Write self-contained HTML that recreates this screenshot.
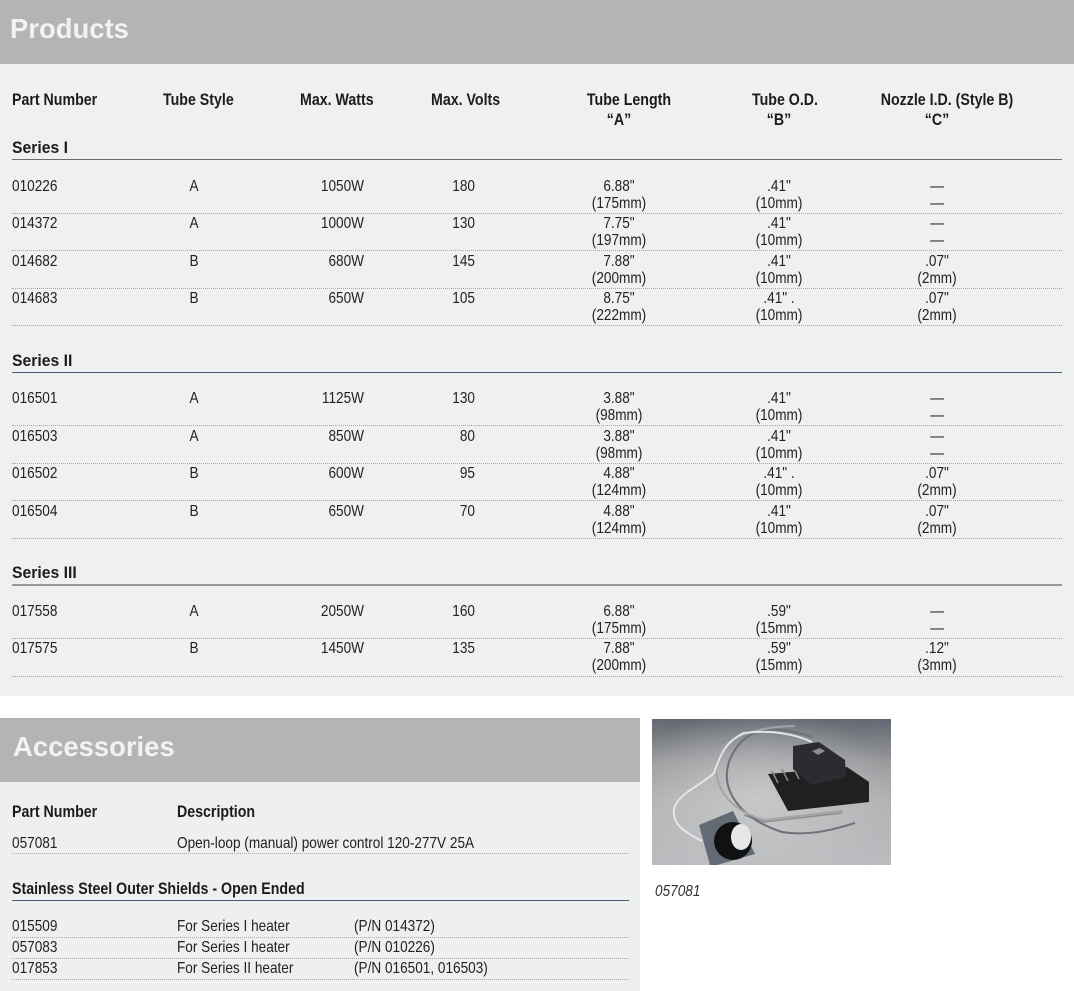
<!DOCTYPE html>
<html><head><meta charset="utf-8"><style>
html,body{margin:0;padding:0;background:#fff}
#p{position:relative;width:1074px;height:991px;overflow:hidden;background:#fff;font-family:"Liberation Sans",sans-serif;color:#222}
#p div{position:absolute}
.t{height:18px;line-height:18px;font-size:16px;margin-top:1px;white-space:pre;transform:scaleX(.85)}
.b{font-weight:bold;font-size:17px;color:#1c1c1c;transform:scaleX(.835)}
.g{transform:scaleX(.925)}
.l{transform-origin:left center}
.c{width:200px;text-align:center;transform-origin:center}
.r{width:200px;text-align:right;transform-origin:right center}
.d{height:0;border-top:1px dotted #a8a8a8;left:12px}
.s{height:1px;left:12px}
.h{font-weight:bold;font-size:28px;line-height:32px;color:#f1f2f1;transform:scaleX(.98);transform-origin:left center;white-space:pre}
</style></head><body><div id="p">
<div style="left:0;top:0;width:1074px;height:64px;background:#b3b5b4"></div>
<div style="left:0;top:64px;width:1074px;height:632px;background:#eff0f0"></div>
<div class="h" style="left:10px;top:13px">Products</div>

<div class="t b l" style="left:12px;top:90px">Part Number</div>
<div class="t b l" style="left:163px;top:90px">Tube Style</div>
<div class="t b l" style="left:300px;top:90px">Max. Watts</div>
<div class="t b l" style="left:431px;top:90px">Max. Volts</div>
<div class="t b c" style="left:529px;top:90px">Tube Length</div>
<div class="t b c" style="left:685px;top:90px">Tube O.D.</div>
<div class="t b c" style="left:847px;top:90px">Nozzle I.D. (Style B)</div>
<div class="t b c" style="left:519px;top:110px">“A”</div>
<div class="t b c" style="left:679px;top:110px">“B”</div>
<div class="t b c" style="left:837px;top:110px">“C”</div>

<div class="t b g l" style="left:12px;top:138px">Series I</div>
<div class="s" style="top:159px;width:1050px;background:#6b6d6f"></div>
<div class="t l" style="left:12px;top:177px">010226</div><div class="t c" style="left:94px;top:177px">A</div><div class="t r" style="left:164px;top:177px">1050W</div><div class="t r" style="left:275px;top:177px">180</div><div class="t c" style="left:519px;top:177px">6.88"</div><div class="t c" style="left:519px;top:194px">(175mm)</div><div class="t c" style="left:679px;top:177px">.41"</div><div class="t c" style="left:679px;top:194px">(10mm)</div><div class="t c" style="left:837px;top:177px">—</div><div class="t c" style="left:837px;top:194px">—</div>
<div class="d" style="top:213px;width:1050px"></div>
<div class="t l" style="left:12px;top:214px">014372</div><div class="t c" style="left:94px;top:214px">A</div><div class="t r" style="left:164px;top:214px">1000W</div><div class="t r" style="left:275px;top:214px">130</div><div class="t c" style="left:519px;top:214px">7.75"</div><div class="t c" style="left:519px;top:231px">(197mm)</div><div class="t c" style="left:679px;top:214px">.41"</div><div class="t c" style="left:679px;top:231px">(10mm)</div><div class="t c" style="left:837px;top:214px">—</div><div class="t c" style="left:837px;top:231px">—</div>
<div class="d" style="top:250px;width:1050px"></div>
<div class="t l" style="left:12px;top:252px">014682</div><div class="t c" style="left:94px;top:252px">B</div><div class="t r" style="left:164px;top:252px">680W</div><div class="t r" style="left:275px;top:252px">145</div><div class="t c" style="left:519px;top:252px">7.88"</div><div class="t c" style="left:519px;top:269px">(200mm)</div><div class="t c" style="left:679px;top:252px">.41"</div><div class="t c" style="left:679px;top:269px">(10mm)</div><div class="t c" style="left:837px;top:252px">.07"</div><div class="t c" style="left:837px;top:269px">(2mm)</div>
<div class="d" style="top:288px;width:1050px"></div>
<div class="t l" style="left:12px;top:289px">014683</div><div class="t c" style="left:94px;top:289px">B</div><div class="t r" style="left:164px;top:289px">650W</div><div class="t r" style="left:275px;top:289px">105</div><div class="t c" style="left:519px;top:289px">8.75"</div><div class="t c" style="left:519px;top:306px">(222mm)</div><div class="t c" style="left:679px;top:289px">.41" .</div><div class="t c" style="left:679px;top:306px">(10mm)</div><div class="t c" style="left:837px;top:289px">.07"</div><div class="t c" style="left:837px;top:306px">(2mm)</div>
<div class="d" style="top:325px;width:1050px"></div>

<div class="t b g l" style="left:12px;top:351px">Series II</div>
<div class="s" style="top:372px;width:1050px;background:#4d5b6e"></div>
<div class="t l" style="left:12px;top:389px">016501</div><div class="t c" style="left:94px;top:389px">A</div><div class="t r" style="left:164px;top:389px">1125W</div><div class="t r" style="left:275px;top:389px">130</div><div class="t c" style="left:519px;top:389px">3.88"</div><div class="t c" style="left:519px;top:406px">(98mm)</div><div class="t c" style="left:679px;top:389px">.41"</div><div class="t c" style="left:679px;top:406px">(10mm)</div><div class="t c" style="left:837px;top:389px">—</div><div class="t c" style="left:837px;top:406px">—</div>
<div class="d" style="top:425px;width:1050px"></div>
<div class="t l" style="left:12px;top:427px">016503</div><div class="t c" style="left:94px;top:427px">A</div><div class="t r" style="left:164px;top:427px">850W</div><div class="t r" style="left:275px;top:427px">80</div><div class="t c" style="left:519px;top:427px">3.88"</div><div class="t c" style="left:519px;top:444px">(98mm)</div><div class="t c" style="left:679px;top:427px">.41"</div><div class="t c" style="left:679px;top:444px">(10mm)</div><div class="t c" style="left:837px;top:427px">—</div><div class="t c" style="left:837px;top:444px">—</div>
<div class="d" style="top:463px;width:1050px"></div>
<div class="t l" style="left:12px;top:464px">016502</div><div class="t c" style="left:94px;top:464px">B</div><div class="t r" style="left:164px;top:464px">600W</div><div class="t r" style="left:275px;top:464px">95</div><div class="t c" style="left:519px;top:464px">4.88"</div><div class="t c" style="left:519px;top:481px">(124mm)</div><div class="t c" style="left:679px;top:464px">.41" .</div><div class="t c" style="left:679px;top:481px">(10mm)</div><div class="t c" style="left:837px;top:464px">.07"</div><div class="t c" style="left:837px;top:481px">(2mm)</div>
<div class="d" style="top:500px;width:1050px"></div>
<div class="t l" style="left:12px;top:502px">016504</div><div class="t c" style="left:94px;top:502px">B</div><div class="t r" style="left:164px;top:502px">650W</div><div class="t r" style="left:275px;top:502px">70</div><div class="t c" style="left:519px;top:502px">4.88"</div><div class="t c" style="left:519px;top:519px">(124mm)</div><div class="t c" style="left:679px;top:502px">.41"</div><div class="t c" style="left:679px;top:519px">(10mm)</div><div class="t c" style="left:837px;top:502px">.07"</div><div class="t c" style="left:837px;top:519px">(2mm)</div>
<div class="d" style="top:538px;width:1050px"></div>

<div class="t b g l" style="left:12px;top:563px">Series III</div>
<div class="s" style="top:584px;width:1050px;height:2px;background:#97999c"></div>
<div class="t l" style="left:12px;top:602px">017558</div><div class="t c" style="left:94px;top:602px">A</div><div class="t r" style="left:164px;top:602px">2050W</div><div class="t r" style="left:275px;top:602px">160</div><div class="t c" style="left:519px;top:602px">6.88"</div><div class="t c" style="left:519px;top:619px">(175mm)</div><div class="t c" style="left:679px;top:602px">.59"</div><div class="t c" style="left:679px;top:619px">(15mm)</div><div class="t c" style="left:837px;top:602px">—</div><div class="t c" style="left:837px;top:619px">—</div>
<div class="d" style="top:638px;width:1050px"></div>
<div class="t l" style="left:12px;top:639px">017575</div><div class="t c" style="left:94px;top:639px">B</div><div class="t r" style="left:164px;top:639px">1450W</div><div class="t r" style="left:275px;top:639px">135</div><div class="t c" style="left:519px;top:639px">7.88"</div><div class="t c" style="left:519px;top:656px">(200mm)</div><div class="t c" style="left:679px;top:639px">.59"</div><div class="t c" style="left:679px;top:656px">(15mm)</div><div class="t c" style="left:837px;top:639px">.12"</div><div class="t c" style="left:837px;top:656px">(3mm)</div>
<div class="d" style="top:676px;width:1050px"></div>

<div style="left:0;top:718px;width:640px;height:64px;background:#b3b5b4"></div>
<div style="left:0;top:782px;width:640px;height:209px;background:#eeefef"></div>
<div class="h" style="left:13px;top:731px">Accessories</div>
<div class="t b l" style="left:12px;top:802px">Part Number</div>
<div class="t b l" style="left:177px;top:802px">Description</div>
<div class="t l" style="left:12px;top:834px">057081</div>
<div class="t l" style="left:177px;top:834px">Open-loop (manual) power control 120-277V 25A</div>
<div class="d" style="top:853px;width:617px"></div>
<div class="t b l" style="left:12px;top:879px">Stainless Steel Outer Shields - Open Ended</div>
<div class="s" style="top:900px;width:617px;background:#4d5b6e"></div>
<div class="t l" style="left:12px;top:917px">015509</div><div class="t l" style="left:177px;top:917px">For Series I heater</div><div class="t l" style="left:354px;top:917px">(P/N 014372)</div>
<div class="d" style="top:937px;width:617px"></div>
<div class="t l" style="left:12px;top:938px">057083</div><div class="t l" style="left:177px;top:938px">For Series I heater</div><div class="t l" style="left:354px;top:938px">(P/N 010226)</div>
<div class="d" style="top:958px;width:617px"></div>
<div class="t l" style="left:12px;top:959px">017853</div><div class="t l" style="left:177px;top:959px">For Series II heater</div><div class="t l" style="left:354px;top:959px">(P/N 016501, 016503)</div>
<div class="d" style="top:979px;width:617px"></div>

<svg style="position:absolute;left:652px;top:719px" width="239" height="146" viewBox="0 0 239 146">
<defs>
<linearGradient id="g" x1="0" y1="0" x2="0" y2="1"><stop offset="0" stop-color="#5f6670"/><stop offset=".14" stop-color="#7b7e82"/><stop offset=".3" stop-color="#9a9b9d"/><stop offset=".55" stop-color="#b2b3b5"/><stop offset="1" stop-color="#bfc0c2"/></linearGradient>
<radialGradient id="e" cx=".45" cy=".55" r=".6"><stop offset="0" stop-color="#d2d3d4" stop-opacity=".8"/><stop offset="1" stop-color="#d2d3d4" stop-opacity="0"/></radialGradient>
<filter id="n" x="0" y="0" width="100%" height="100%"><feTurbulence type="fractalNoise" baseFrequency="1.1" numOctaves="1" seed="4"/><feColorMatrix values="0 0 0 0 .25 0 0 0 0 .27 0 0 0 0 .3 1.6 0 0 0 -.55"/></filter>
</defs>
<rect width="239" height="146" fill="url(#g)"/>
<rect width="239" height="146" fill="url(#e)"/>
<rect width="239" height="146" filter="url(#n)" opacity=".3"/>
<path d="M190 94L112 103L92 96" fill="none" stroke="#8d8f91" stroke-width="1.5"/>
<path d="M160 18C120 4 92 8 78 40C66 72 90 100 130 113C160 118 190 108 203 104" fill="none" stroke="#6d7074" stroke-width="2"/>
<path d="M191 92L112 101C80 92 60 70 65 40C70 20 100 8 143 7" fill="none" stroke="#a3a4a6" stroke-width="2"/>
<path d="M50 122C30 112 20 104 22 90C26 74 50 66 62 54C68 36 74 22 92 14C120 10 145 16 160 23" fill="none" stroke="#e4e5e5" stroke-width="2"/>
<path d="M116 55L136 92L217 83V63L195 48Z" fill="#1f2021"/>
<path d="M120 52l6 12M130 50l6 12M141 48l6 12" stroke="#8a8b8d" stroke-width="1.5"/>
<path d="M141 27L167 23L193 41L194 58L160 66L141 50Z" fill="#2b2c2f"/>
<path d="M160 32l8-3 5 3-7 4z" fill="#8a8d90"/>
<path d="M47 106L81 92L103 135L65 146H58Z" fill="#626a74"/>
<circle cx="81" cy="122" r="19" fill="#101112"/>
<ellipse cx="89" cy="118" rx="10" ry="13" fill="#e6e6e4"/>
</svg>
<div class="t l" style="left:655px;top:882px;font-style:italic;color:#333">057081</div>
</div></body></html>
